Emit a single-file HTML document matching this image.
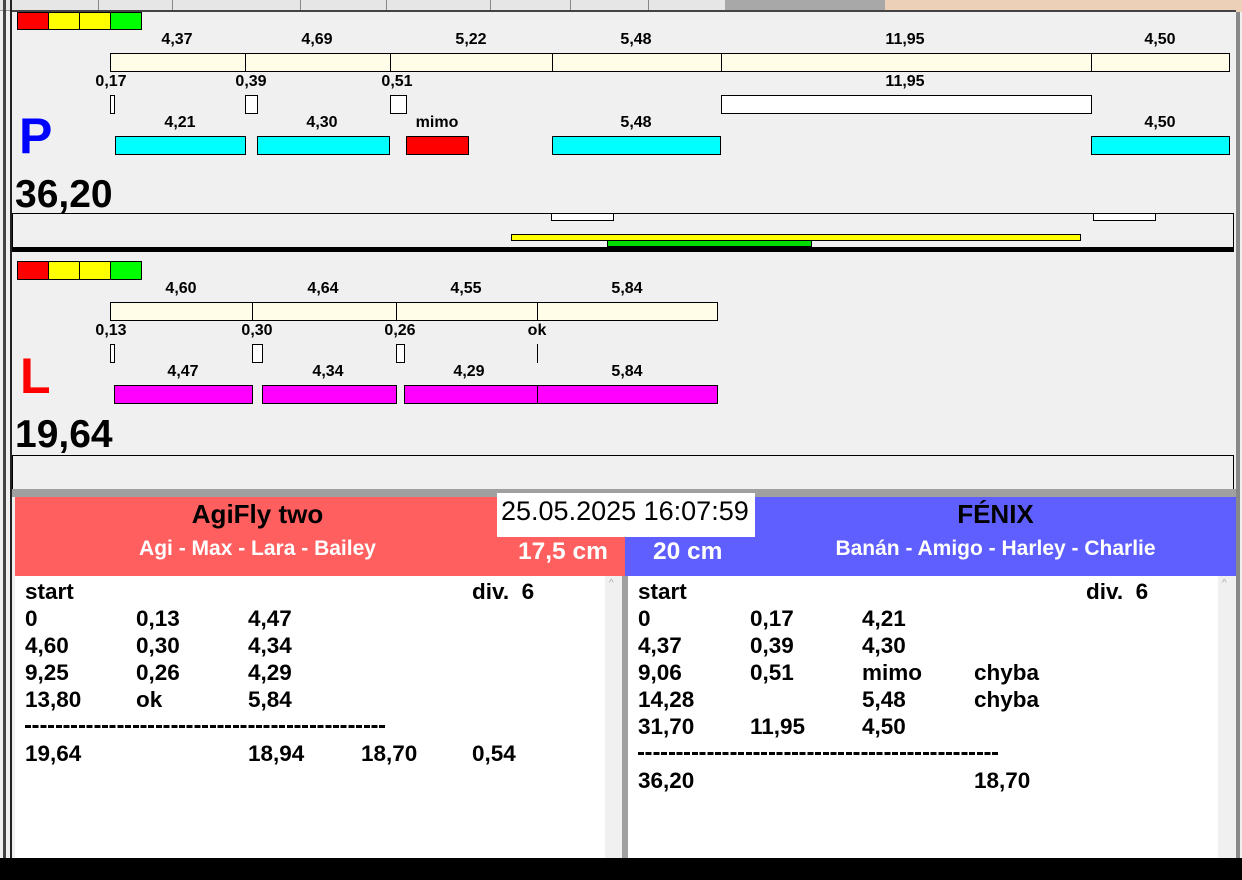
<!DOCTYPE html>
<html><head><meta charset="utf-8"><style>
body{margin:0;width:1242px;height:880px;background:#f0f0f0;position:relative;overflow:hidden;font-family:"Liberation Sans",sans-serif;}
.a{position:absolute;}
.l{position:absolute;font-weight:bold;font-size:16px;transform:translateX(-50%);line-height:18px;white-space:nowrap;color:#000}
.b{position:absolute;box-sizing:border-box;border:1px solid #000;}
.t{position:absolute;font-weight:bold;font-size:22.5px;line-height:27px;white-space:nowrap;color:#000}
</style></head><body>
<!-- top tabs -->
<div class="a" style="left:0;top:0;width:885px;height:10px;background:#e6e6e6;border-bottom:1px solid #999"></div>
<div class="a" style="left:725px;top:0;width:160px;height:10px;background:#a8a8a8"></div>
<div class="a" style="left:885px;top:0;width:357px;height:12px;background:#ecd0b8"></div>
<div class="a" style="left:98px;top:0;width:1px;height:10px;background:#888"></div>
<div class="a" style="left:172px;top:0;width:1px;height:10px;background:#888"></div>
<div class="a" style="left:300px;top:0;width:1px;height:10px;background:#888"></div>
<div class="a" style="left:386px;top:0;width:1px;height:10px;background:#888"></div>
<div class="a" style="left:490px;top:0;width:1px;height:10px;background:#888"></div>
<div class="a" style="left:570px;top:0;width:1px;height:10px;background:#888"></div>
<div class="a" style="left:648px;top:0;width:1px;height:10px;background:#888"></div>
<!-- left borders -->
<div class="a" style="left:3px;top:0;width:3px;height:860px;background:#444"></div>
<div class="a" style="left:10px;top:0;width:2px;height:860px;background:#222"></div>
<div class="a" style="left:1236px;top:12px;width:4px;height:848px;background:#888"></div>
<div class="a" style="left:12px;top:10px;width:1224px;height:2px;background:#444"></div>

<!-- P panel -->
<div class="b" style="left:17px;top:12px;width:32px;height:18px;background:#f00"></div>
<div class="b" style="left:48px;top:12px;width:32px;height:18px;background:#ff0"></div>
<div class="b" style="left:79px;top:12px;width:32px;height:18px;background:#ff0"></div>
<div class="b" style="left:110px;top:12px;width:32px;height:18px;background:#0f0"></div>

<div class="l" style="left:177px;top:31px">4,37</div>
<div class="l" style="left:317px;top:31px">4,69</div>
<div class="l" style="left:471px;top:31px">5,22</div>
<div class="l" style="left:636px;top:31px">5,48</div>
<div class="l" style="left:905px;top:31px">11,95</div>
<div class="l" style="left:1160px;top:31px">4,50</div>
<div class="b" style="left:110px;top:53px;width:136px;height:19px;background:#fffde8"></div>
<div class="b" style="left:245px;top:53px;width:146px;height:19px;background:#fffde8"></div>
<div class="b" style="left:390px;top:53px;width:163px;height:19px;background:#fffde8"></div>
<div class="b" style="left:552px;top:53px;width:170px;height:19px;background:#fffde8"></div>
<div class="b" style="left:721px;top:53px;width:371px;height:19px;background:#fffde8"></div>
<div class="b" style="left:1091px;top:53px;width:139px;height:19px;background:#fffde8"></div>

<div class="l" style="left:111px;top:73px">0,17</div>
<div class="l" style="left:251px;top:73px">0,39</div>
<div class="l" style="left:397px;top:73px">0,51</div>
<div class="l" style="left:905px;top:73px">11,95</div>
<div class="b" style="left:110px;top:95px;width:5px;height:19px;background:#fff"></div>
<div class="b" style="left:245px;top:95px;width:13px;height:19px;background:#fff"></div>
<div class="b" style="left:390px;top:95px;width:17px;height:19px;background:#fff"></div>
<div class="b" style="left:721px;top:95px;width:371px;height:19px;background:#fff"></div>

<div class="a" style="left:19px;top:106px;font-size:50px;font-weight:bold;color:#00f;line-height:60px">P</div>
<div class="l" style="left:180px;top:114px">4,21</div>
<div class="l" style="left:322px;top:114px">4,30</div>
<div class="l" style="left:437px;top:114px">mimo</div>
<div class="l" style="left:636px;top:114px">5,48</div>
<div class="l" style="left:1160px;top:114px">4,50</div>
<div class="b" style="left:115px;top:136px;width:131px;height:19px;background:#0ff"></div>
<div class="b" style="left:257px;top:136px;width:133px;height:19px;background:#0ff"></div>
<div class="b" style="left:406px;top:136px;width:63px;height:19px;background:#f00"></div>
<div class="b" style="left:552px;top:136px;width:169px;height:19px;background:#0ff"></div>
<div class="b" style="left:1091px;top:136px;width:139px;height:19px;background:#0ff"></div>

<div class="a" style="left:15px;top:172px;font-size:39px;font-weight:bold;line-height:46px">36,20</div>
<div class="a" style="left:12px;top:213px;width:1222px;height:35px;box-sizing:border-box;border:1px solid #000;border-bottom:none"></div>
<div class="b" style="left:551px;top:213px;width:63px;height:8px;background:#fff"></div>
<div class="b" style="left:1093px;top:213px;width:63px;height:8px;background:#fff"></div>
<div class="b" style="left:511px;top:234px;width:570px;height:7px;background:#ff0"></div>
<div class="b" style="left:607px;top:240px;width:205px;height:7px;background:#0d0"></div>
<div class="a" style="left:12px;top:247px;width:1222px;height:5px;background:#000"></div>

<!-- L panel -->
<div class="b" style="left:17px;top:261px;width:32px;height:19px;background:#f00"></div>
<div class="b" style="left:48px;top:261px;width:32px;height:19px;background:#ff0"></div>
<div class="b" style="left:79px;top:261px;width:32px;height:19px;background:#ff0"></div>
<div class="b" style="left:110px;top:261px;width:32px;height:19px;background:#0f0"></div>

<div class="l" style="left:181px;top:280px">4,60</div>
<div class="l" style="left:323px;top:280px">4,64</div>
<div class="l" style="left:466px;top:280px">4,55</div>
<div class="l" style="left:627px;top:280px">5,84</div>
<div class="b" style="left:110px;top:302px;width:143px;height:19px;background:#fffde8"></div>
<div class="b" style="left:252px;top:302px;width:145px;height:19px;background:#fffde8"></div>
<div class="b" style="left:396px;top:302px;width:142px;height:19px;background:#fffde8"></div>
<div class="b" style="left:537px;top:302px;width:181px;height:19px;background:#fffde8"></div>

<div class="l" style="left:111px;top:322px">0,13</div>
<div class="l" style="left:257px;top:322px">0,30</div>
<div class="l" style="left:400px;top:322px">0,26</div>
<div class="l" style="left:537px;top:322px">ok</div>
<div class="b" style="left:110px;top:344px;width:5px;height:19px;background:#fff"></div>
<div class="b" style="left:252px;top:344px;width:11px;height:19px;background:#fff"></div>
<div class="b" style="left:396px;top:344px;width:9px;height:19px;background:#fff"></div>
<div class="a" style="left:537px;top:344px;width:1px;height:19px;background:#000"></div>

<div class="a" style="left:20px;top:346px;font-size:50px;font-weight:bold;color:#f00;line-height:60px">L</div>
<div class="l" style="left:183px;top:363px">4,47</div>
<div class="l" style="left:328px;top:363px">4,34</div>
<div class="l" style="left:469px;top:363px">4,29</div>
<div class="l" style="left:627px;top:363px">5,84</div>
<div class="b" style="left:114px;top:385px;width:139px;height:19px;background:#f0f"></div>
<div class="b" style="left:262px;top:385px;width:135px;height:19px;background:#f0f"></div>
<div class="b" style="left:404px;top:385px;width:134px;height:19px;background:#f0f"></div>
<div class="b" style="left:537px;top:385px;width:181px;height:19px;background:#f0f"></div>

<div class="a" style="left:15px;top:412px;font-size:39px;font-weight:bold;line-height:46px">19,64</div>
<div class="a" style="left:12px;top:455px;width:1222px;height:34px;box-sizing:border-box;border:1px solid #000;border-bottom:none"></div>
<div class="a" style="left:12px;top:489px;width:1224px;height:8px;background:#a0a0a0"></div>

<!-- headers -->
<div class="a" style="left:15px;top:497px;width:610px;height:79px;background:#ff5f5f"></div>
<div class="a" style="left:625px;top:497px;width:611px;height:79px;background:#5f5fff"></div>
<div class="a" style="left:497px;top:493px;width:258px;height:44px;background:#fff"></div>
<div class="a" style="left:501px;top:494px;font-size:27px;line-height:34px">25.05.2025 16:07:59</div>
<div class="a" style="left:15px;top:497px;width:485px;text-align:center;font-size:26px;font-weight:bold;line-height:34px">AgiFly two</div>
<div class="a" style="left:15px;top:537px;width:485px;text-align:center;font-size:21px;font-weight:bold;line-height:24px;color:#fff">Agi - Max - Lara - Bailey</div>
<div class="a" style="left:518px;top:538px;font-size:24.5px;font-weight:bold;line-height:28px;color:#fff">17,5 cm</div>
<div class="a" style="left:653px;top:538px;font-size:24.5px;font-weight:bold;line-height:28px;color:#fff">20 cm</div>
<div class="a" style="left:755px;top:497px;width:481px;text-align:center;font-size:26px;font-weight:bold;line-height:34px">FÉNIX</div>
<div class="a" style="left:755px;top:537px;width:481px;text-align:center;font-size:21px;font-weight:bold;line-height:24px;color:#fff">Banán - Amigo - Harley - Charlie</div>

<!-- lists -->
<div class="a" style="left:15px;top:576px;width:590px;height:282px;background:#fff"></div>
<div class="a" style="left:605px;top:576px;width:17px;height:282px;background:#f0f0f0"></div>
<div class="a" style="left:622px;top:576px;width:6px;height:282px;background:#a0a0a0"></div>
<div class="a" style="left:628px;top:576px;width:590px;height:282px;background:#fff"></div>
<div class="a" style="left:1218px;top:576px;width:18px;height:282px;background:#f0f0f0"></div>
<div class="a" style="left:609px;top:578px;font-size:10px;color:#aaa">^</div>
<div class="a" style="left:1222px;top:578px;font-size:10px;color:#aaa">^</div>

<div class="t" style="left:25px;top:578px">start</div><div class="t" style="left:472px;top:578px">div.&nbsp; 6</div>
<div class="t" style="left:25px;top:605px">0</div><div class="t" style="left:136px;top:605px">0,13</div><div class="t" style="left:248px;top:605px">4,47</div>
<div class="t" style="left:25px;top:632px">4,60</div><div class="t" style="left:136px;top:632px">0,30</div><div class="t" style="left:248px;top:632px">4,34</div>
<div class="t" style="left:25px;top:659px">9,25</div><div class="t" style="left:136px;top:659px">0,26</div><div class="t" style="left:248px;top:659px">4,29</div>
<div class="t" style="left:25px;top:686px">13,80</div><div class="t" style="left:136px;top:686px">ok</div><div class="t" style="left:248px;top:686px">5,84</div>
<div class="a" style="left:25px;top:725px;width:360px;height:3px;background:repeating-linear-gradient(90deg,#000 0 6px,transparent 6px 7.7px)"></div>
<div class="t" style="left:25px;top:740px">19,64</div><div class="t" style="left:248px;top:740px">18,94</div><div class="t" style="left:361px;top:740px">18,70</div><div class="t" style="left:472px;top:740px">0,54</div>

<div class="t" style="left:638px;top:578px">start</div><div class="t" style="left:1086px;top:578px">div.&nbsp; 6</div>
<div class="t" style="left:638px;top:605px">0</div><div class="t" style="left:750px;top:605px">0,17</div><div class="t" style="left:862px;top:605px">4,21</div>
<div class="t" style="left:638px;top:632px">4,37</div><div class="t" style="left:750px;top:632px">0,39</div><div class="t" style="left:862px;top:632px">4,30</div>
<div class="t" style="left:638px;top:659px">9,06</div><div class="t" style="left:750px;top:659px">0,51</div><div class="t" style="left:862px;top:659px">mimo</div><div class="t" style="left:974px;top:659px">chyba</div>
<div class="t" style="left:638px;top:686px">14,28</div><div class="t" style="left:862px;top:686px">5,48</div><div class="t" style="left:974px;top:686px">chyba</div>
<div class="t" style="left:638px;top:713px">31,70</div><div class="t" style="left:750px;top:713px">11,95</div><div class="t" style="left:862px;top:713px">4,50</div>
<div class="a" style="left:638px;top:752px;width:360px;height:3px;background:repeating-linear-gradient(90deg,#000 0 6px,transparent 6px 7.7px)"></div>
<div class="t" style="left:638px;top:767px">36,20</div><div class="t" style="left:974px;top:767px">18,70</div>

<div class="a" style="left:0;top:858px;width:1242px;height:22px;background:#000"></div>
</body></html>
